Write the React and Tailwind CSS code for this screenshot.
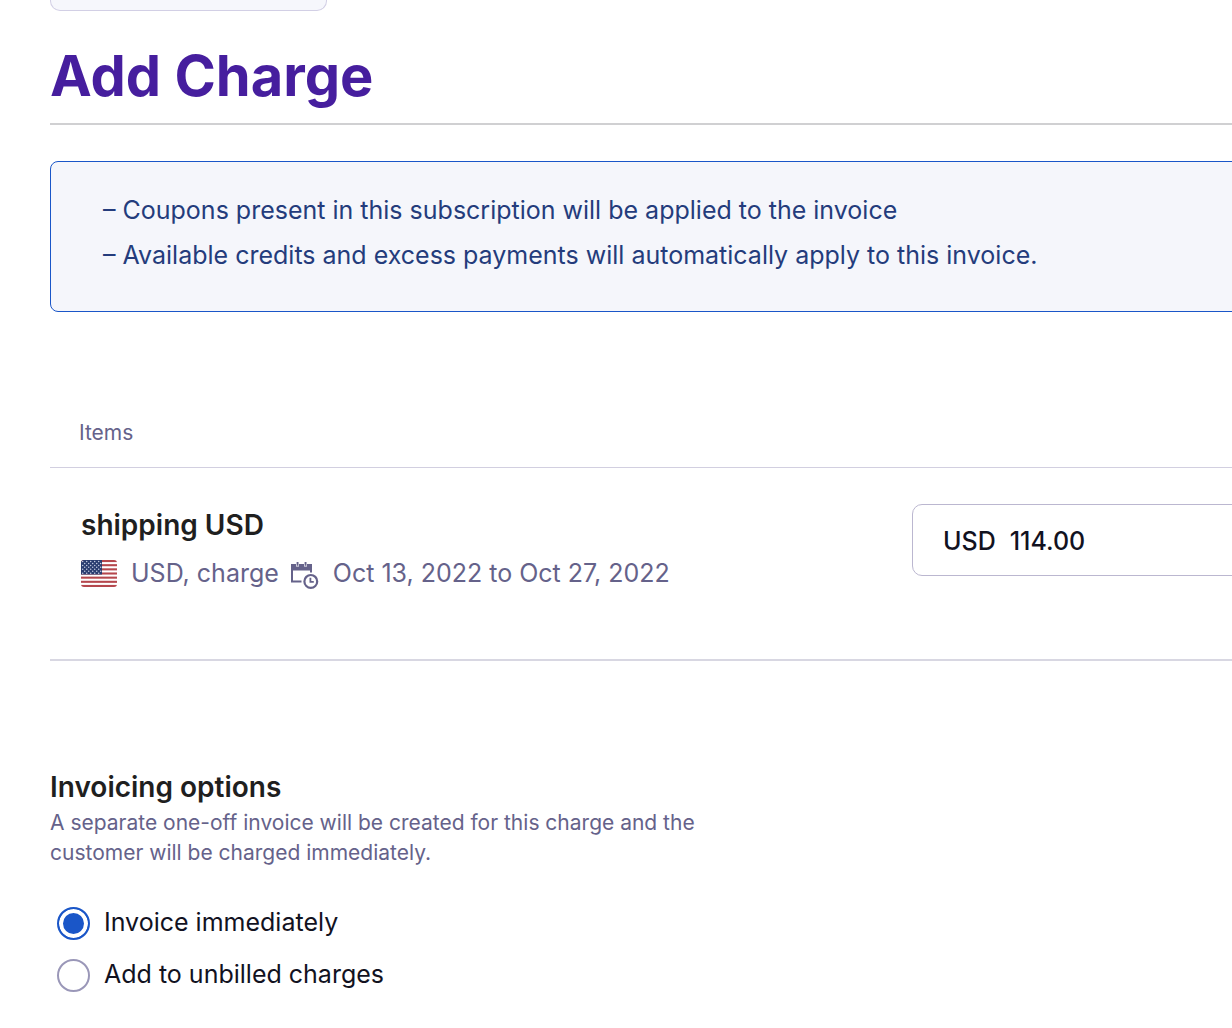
const STRIPES = [0, 2, 4, 6, 8, 10, 12];
const STAR_ROWS = [0, 1, 2, 3, 4, 5, 6];
const STAR_COLUMNS = [0, 1, 2, 3, 4];

function UsFlag() {
  return (
    <svg viewBox="0 0 36 27" className="mr-[14px] h-[27px] w-9 shrink-0 rounded-[3px]" role="img" aria-label="United States">
      <rect width="36" height="27" fill="#fff" />
      {STRIPES.map((row) => (
        <rect key={row} y={(row * 27) / 13} width="36" height={27 / 13} fill="#b5474d" />
      ))}
      <rect width="21" height="14.5" fill="#2b3d70" />
      {STAR_ROWS.map((row) =>
        STAR_COLUMNS.map((col) => (
          <circle
            key={`${row}-${col}`}
            cx={1.7 + col * 4 + (row % 2) * 2}
            cy={1.5 + row * 1.95}
            r="0.75"
            fill="#c3cbe0"
          />
        ))
      )}
    </svg>
  );
}

function CalendarClockIcon() {
  return (
    <svg viewBox="0 0 28 28" className="mt-1 ml-3 size-7 shrink-0" fill="none" stroke="#65628a" aria-hidden="true">
      <path d="M0 3h5v2.5h3V3h5v2.5h3V3h5v6.5H0z" fill="#65628a" stroke="none" />
      <path d="M5.6 1h1.9v3.7H5.6zM13.6 1h1.9v3.7h-1.9z" fill="#65628a" stroke="none" />
      <path d="M1 8v12.5h9.5M20 8v3.5" strokeWidth="2" />
      <circle cx="19.8" cy="20.4" r="6.4" strokeWidth="2.2" />
      <path d="M19.4 16.8v4h3.4" strokeWidth="1.8" />
    </svg>
  );
}

function InvoiceOption({ label, value, defaultChecked }) {
  return (
    <label className="flex h-[52px] items-center gap-[14px] pl-[7px] text-[25px]">
      <input
        type="radio"
        name="invoicing"
        value={value}
        defaultChecked={defaultChecked}
        className="size-[33px] shrink-0 appearance-none rounded-full border-2 border-[#9a97b8] bg-white checked:border-[#1a56c8] checked:bg-[#1a56c8] checked:shadow-[inset_0_0_0_4px_#fff]"
      />
      {label}
    </label>
  );
}

export default function App() {
  return (
    <main className="min-h-screen overflow-hidden bg-white pl-[50px] font-['Inter',sans-serif] text-[#12121f]">
      <button
        type="button"
        aria-label="Back"
        className="block h-[11px] w-[277px] rounded-b-[10px] border border-t-0 border-[#d2cfe5] bg-[#f6f7fc]"
      />
      <h1 className="mt-[29px] border-b-2 border-[#d0d0d2] pb-[11px] text-[56px] leading-[72px] font-bold text-[#461e9e]">
        Add Charge
      </h1>
      <ul className="mt-9 -mr-3 rounded-lg border border-[#1a56c8] bg-[#f5f6fb] pt-[26px] pb-[33px] pl-[52px] text-[25px] leading-[45px] text-[#243c7c]">
        <li>– Coupons present in this subscription will be applied to the invoice</li>
        <li>– Available credits and excess payments will automatically apply to this invoice.</li>
      </ul>
      <section>
        <h2 className="mt-[106px] border-b border-[#d2cfe0] pb-[19px] pl-[29px] text-[21px] leading-[30px] text-[#65628a]">
          Items
        </h2>
        <div className="flex justify-between border-b-2 border-[#d8d7e2] pt-9 pb-[68px] pl-[31px]">
          <div>
            <h3 className="text-[28px] leading-[42px] font-semibold text-[#1f1f1f]">shipping USD</h3>
            <p className="mt-[9px] flex items-center text-[25px] leading-9 text-[#65628a]">
              <UsFlag />
              USD, charge
              <CalendarClockIcon />
              <span className="ml-[14px]">Oct 13, 2022 to Oct 27, 2022</span>
            </p>
          </div>
          <label className="-mr-3 flex h-[72px] w-[332px] items-center rounded-[10px] border border-[#bbb7d0] pt-[3px] pl-[30px] text-[25px] font-medium">
            USD
            <input defaultValue="114.00" inputMode="decimal" className="ml-[14px] w-40 bg-transparent" />
          </label>
        </div>
      </section>
      <section className="pt-[105px]">
        <h2 className="text-[28px] leading-[42px] font-semibold text-[#1f1f1f]">Invoicing options</h2>
        <p className="max-w-[680px] text-[21px] leading-[30px] text-[#65628a]">
          A separate one-off invoice will be created for this charge and the customer will be charged immediately.
        </p>
        <div className="mt-[29px]">
          <InvoiceOption label="Invoice immediately" value="immediate" defaultChecked />
          <InvoiceOption label="Add to unbilled charges" value="unbilled" />
        </div>
      </section>
    </main>
  );
}
